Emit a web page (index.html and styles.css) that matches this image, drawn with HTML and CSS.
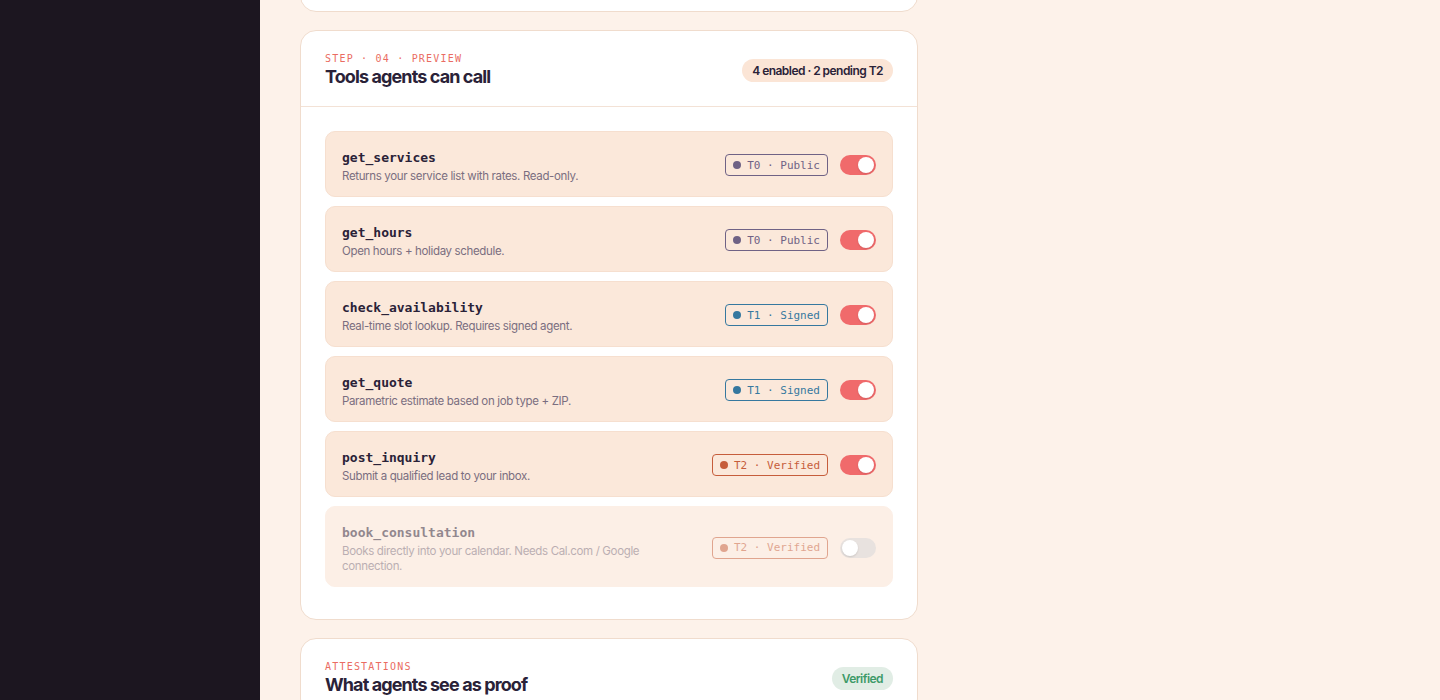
FILE: index.html
```html
<!DOCTYPE html>
<html lang="en">
<head>
<meta charset="utf-8">
<title>Agent tools</title>
<link rel="stylesheet" href="styles.css">
</head>
<body>
<div class="app">
  <aside class="sidebar"></aside>
  <main class="main">
    <section class="card card--prev"></section>

    <section class="card">
      <header class="card-head">
        <div class="head-text">
          <div class="eyebrow">STEP · 04 · PREVIEW</div>
          <h2 class="title">Tools agents can call</h2>
        </div>
        <span class="pill">4 enabled · 2 pending T2</span>
      </header>
      <div class="card-body">
        <ul class="tools">
          <li class="tool">
            <div class="tool-text">
              <div class="tool-name">get_services</div>
              <div class="tool-desc">Returns your service list with rates. Read-only.</div>
            </div>
            <div class="tool-meta">
              <span class="tier tier--t0"><i class="dot"></i>T0 · Public</span>
              <span class="toggle is-on"><i class="knob"></i></span>
            </div>
          </li>
          <li class="tool">
            <div class="tool-text">
              <div class="tool-name">get_hours</div>
              <div class="tool-desc">Open hours + holiday schedule.</div>
            </div>
            <div class="tool-meta">
              <span class="tier tier--t0"><i class="dot"></i>T0 · Public</span>
              <span class="toggle is-on"><i class="knob"></i></span>
            </div>
          </li>
          <li class="tool">
            <div class="tool-text">
              <div class="tool-name">check_availability</div>
              <div class="tool-desc">Real-time slot lookup. Requires signed agent.</div>
            </div>
            <div class="tool-meta">
              <span class="tier tier--t1"><i class="dot"></i>T1 · Signed</span>
              <span class="toggle is-on"><i class="knob"></i></span>
            </div>
          </li>
          <li class="tool">
            <div class="tool-text">
              <div class="tool-name">get_quote</div>
              <div class="tool-desc">Parametric estimate based on job type + ZIP.</div>
            </div>
            <div class="tool-meta">
              <span class="tier tier--t1"><i class="dot"></i>T1 · Signed</span>
              <span class="toggle is-on"><i class="knob"></i></span>
            </div>
          </li>
          <li class="tool">
            <div class="tool-text">
              <div class="tool-name">post_inquiry</div>
              <div class="tool-desc">Submit a qualified lead to your inbox.</div>
            </div>
            <div class="tool-meta">
              <span class="tier tier--t2"><i class="dot"></i>T2 · Verified</span>
              <span class="toggle is-on"><i class="knob"></i></span>
            </div>
          </li>
          <li class="tool is-disabled">
            <div class="tool-text">
              <div class="tool-name">book_consultation</div>
              <div class="tool-desc">Books directly into your calendar. Needs Cal.com / Google connection.</div>
            </div>
            <div class="tool-meta">
              <span class="tier tier--t2"><i class="dot"></i>T2 · Verified</span>
              <span class="toggle"><i class="knob"></i></span>
            </div>
          </li>
        </ul>
      </div>
    </section>

    <section class="card">
      <header class="card-head">
        <div class="head-text">
          <div class="eyebrow">ATTESTATIONS</div>
          <h2 class="title">What agents see as proof</h2>
        </div>
        <span class="pill pill--ok">Verified</span>
      </header>
    </section>
  </main>
</div>
</body>
</html>
```

FILE: styles.css
```css
* { box-sizing: border-box; }

html, body {
  margin: 0;
  height: 100%;
  overflow: hidden;
}

body {
  font-family: Inter, "Noto Sans", sans-serif;
  background: #fdf2ea;
  color: #2a2238;
}

.app {
  display: flex;
  height: 700px;
}

.sidebar {
  width: 260px;
  flex: none;
  background: #1c1620;
}

.main {
  flex: 1;
  padding: 0 40px;
  display: flex;
  flex-direction: column;
  gap: 18px;
}

.card {
  width: 618px;
  flex: none;
  background: #fff;
  border: 1px solid #f0dccd;
  border-radius: 16px;
}

/* previous step card, scrolled mostly out of view */
.card--prev {
  height: 60px;
  margin-top: -48px;
}

.card-head {
  display: flex;
  align-items: center;
  justify-content: space-between;
  padding: 21px 24px 18px;
}

.card-body {
  border-top: 1px solid #f3e2d6;
  padding: 24px 24px 32px;
}

.eyebrow {
  font-family: "DejaVu Sans Mono", monospace;
  font-size: 10px;
  line-height: 14px;
  letter-spacing: 0.12em;
  color: #ea6c62;
}

.title {
  margin: 0;
  font-size: 18px;
  line-height: 22px;
  font-weight: 700;
  letter-spacing: -0.05em;
  color: #2a2238;
}

.pill {
  display: inline-flex;
  align-items: center;
  height: 23px;
  padding: 0 10px;
  border-radius: 999px;
  background: #fbe5d6;
  font-size: 12px;
  font-weight: 600;
  letter-spacing: -0.045em;
  color: #2a2238;
}

.pill--ok {
  background: #e1ede5;
  color: #3d9a68;
}

.tools {
  list-style: none;
  margin: 0;
  padding: 0;
  display: flex;
  flex-direction: column;
  gap: 9px;
}

.tool {
  display: flex;
  align-items: center;
  justify-content: space-between;
  gap: 16px;
  padding: 17px 16px 12px;
  background: #fbe8da;
  border: 1px solid #f6dfcf;
  border-radius: 10px;
}

.tool-text {
  max-width: 320px;
}

.tool-name {
  font-family: "DejaVu Sans Mono", monospace;
  font-size: 13px;
  line-height: 18px;
  font-weight: 600;
  color: #2a2238;
}

.tool-desc {
  margin-top: 2px;
  font-size: 11.5px;
  line-height: 15px;
  color: #7a6e80;
  letter-spacing: -0.03em;
}

.tool-meta {
  display: flex;
  align-items: center;
  gap: 12px;
  margin-top: -3px;
}

.tier {
  display: inline-flex;
  align-items: center;
  gap: 6px;
  height: 22px;
  padding: 0 7px;
  border: 1px solid currentColor;
  border-radius: 4px;
  font-family: "DejaVu Sans Mono", monospace;
  font-size: 11px;
  font-weight: 400;
}

.tier .dot {
  width: 8px;
  height: 8px;
  border-radius: 50%;
  background: currentColor;
}

.tier--t0 { color: #6f6285; }
.tier--t1 { color: #36789f; }
.tier--t2 { color: #c65d3b; }

.toggle {
  position: relative;
  width: 36px;
  height: 20px;
  border-radius: 999px;
  background: #e8e2df;
}

.toggle .knob {
  position: absolute;
  top: 2px;
  left: 2px;
  width: 16px;
  height: 16px;
  border-radius: 50%;
  background: #fff;
  box-shadow: 0 1px 2px rgba(0, 0, 0, 0.12);
}

.toggle.is-on { background: #f06a6b; }
.toggle.is-on .knob { left: 18px; }

.tool.is-disabled {
  background: #fcefe6;
  border-color: #fcefe6;
}

.tool.is-disabled .tool-text,
.tool.is-disabled .tier {
  opacity: 0.5;
}
```
